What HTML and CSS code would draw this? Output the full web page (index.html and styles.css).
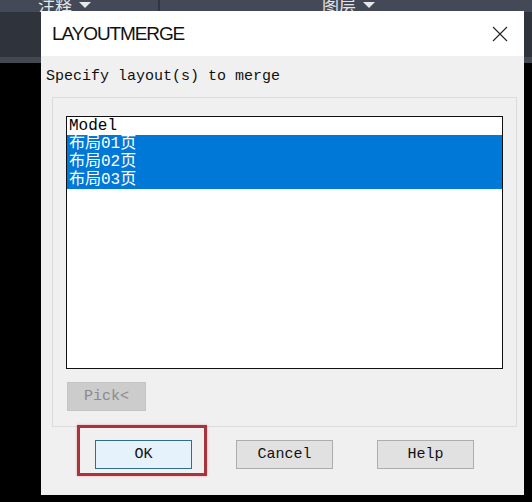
FILE: index.html
```html
<html lang="zh">

<head>
    <meta charset="UTF-8">
    <meta name="viewport" content="width=device-width, initial-scale=1.0">
    <title>LAYOUTMERGE</title>
    <link rel="stylesheet" href="styles.css">
</head>

<body>
    <div class="toolbar">
        <div class="ribbon">
            <div class="panel panel-left">
                <span class="panel-name">注释</span>
                <span class="arrow"></span>
            </div>
            <div class="panel panel-right">
                <span class="panel-name">图层</span>
                <span class="arrow"></span>
            </div>
        </div>
        <div class="ribbon-body"></div>
        <div class="ribbon-edge"></div>
    </div>

    <div class="dialog">
        <div class="titlebar">
            <span class="title">LAYOUTMERGE</span>
            <svg class="close" width="16" height="16" viewBox="0 0 16 16">
                <path d="M1 1 L15 15 M15 1 L1 15" stroke="#222" stroke-width="1.1" fill="none" />
            </svg>
        </div>

        <div class="content">
            <div class="prompt">Specify layout(s) to merge</div>

            <div class="group">
                <ul class="listbox">
                    <li>Model</li>
                    <li class="selected">布局01页</li>
                    <li class="selected">布局02页</li>
                    <li class="selected">布局03页</li>
                </ul>
                <button class="btn btn-disabled" disabled>Pick&lt;</button>
            </div>

            <div class="actions">
                <button class="btn btn-default">OK</button>
                <button class="btn">Cancel</button>
                <button class="btn">Help</button>
                <!-- recuadro rojo de la captura -->
                <div class="highlight"></div>
            </div>
        </div>
    </div>
</body>

</html>
```

FILE: styles.css
```css
body {
    margin: 0;
    width: 532px;
    height: 502px;
    background: #000;
    overflow: hidden;
    position: relative;
    font-family: "Liberation Mono", "Noto Sans CJK SC", monospace;
}

/* barra de AutoCAD de fondo */
.ribbon {
    height: 12px;
    background: #434956;
    display: flex;
    overflow: hidden;
}

.panel {
    display: flex;
    align-items: flex-end;
    gap: 7px;
    height: 12px;
    box-sizing: border-box;
}

.panel-left {
    width: 160px;
    padding-left: 38px;
    border-right: 2px solid #30353e;
}

.panel-right {
    padding-left: 162px;
}

.panel-name {
    font-family: "Noto Sans CJK SC", sans-serif;
    font-size: 17px;
    line-height: 17px;
    color: #e6e6e6;
    margin-bottom: -1px;
}

.arrow {
    width: 0;
    height: 0;
    border-left: 6px solid transparent;
    border-right: 6px solid transparent;
    border-top: 6px solid #e8e8e8;
    margin-bottom: 4px;
}

.ribbon-body {
    height: 45px;
    background: #2e333c;
}

.ribbon-edge {
    height: 6px;
    background: #434851;
}

/* ventana */
.dialog {
    position: absolute;
    left: 41px;
    top: 11px;
    width: 483px;
    height: 484px;
    background: #f0f0f0;
    display: flex;
    flex-direction: column;
}

.titlebar {
    height: 45px;
    background: #fff;
    display: flex;
    align-items: center;
    justify-content: space-between;
    padding: 0 16px 0 11px;
}

.title {
    font-family: "Liberation Sans", Arial, sans-serif;
    font-size: 19px;
    letter-spacing: -1.1px;
    color: #111;
}

.close {
    display: block;
}

.content {
    position: relative;
    flex: 1;
    padding: 12px 7px 0 5px;
}

.prompt {
    font-size: 15px;
    line-height: 18px;
    color: #111;
}

.group {
    margin: 11px 0 0 6px;
    height: 330px;
    box-sizing: border-box;
    border: 1px solid #dcdcdc;
    padding: 18px 13px 0 13px;
}

.listbox {
    list-style: none;
    margin: 0;
    padding: 0;
    height: 253px;
    box-sizing: border-box;
    border: 1px solid #111;
    background: #fff;
}

.listbox li {
    font-size: 16px;
    line-height: 18px;
    height: 18px;
    padding-left: 2px;
    color: #000;
}

.listbox li.selected {
    background: #0078d7;
    color: #fff;
}

.btn {
    font-family: "Liberation Mono", monospace;
    font-size: 15px;
    width: 97px;
    height: 29px;
    padding: 0;
    background: #e1e1e1;
    border: 1px solid #adadad;
    color: #111;
}

.btn-disabled {
    margin-top: 13px;
    margin-left: 1px;
    width: 79px;
    background: #cccccc;
    border-color: #c4c4c4;
    color: #8a8a8a;
}

.btn-default {
    background: #e5f1fb;
    border-color: #2f6f8e;
}

.actions {
    position: relative;
    display: flex;
    gap: 44px;
    padding: 13px 0 0 49px;
}

.highlight {
    position: absolute;
    left: 31px;
    top: -2px;
    width: 130px;
    height: 51px;
    box-sizing: border-box;
    border: 3px solid #a8333b;
    box-shadow: 0 0 2px rgba(230, 80, 90, 0.5);
}
```
